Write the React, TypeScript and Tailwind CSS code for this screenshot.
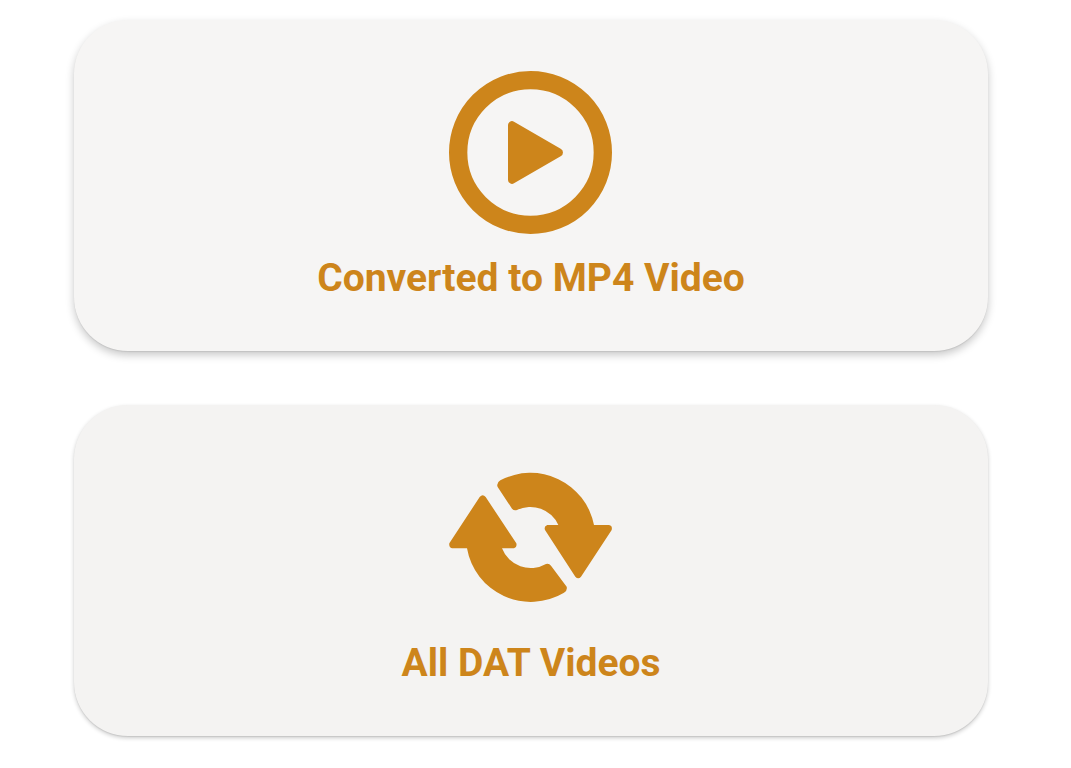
import type { ReactNode } from "react";
import clsx from "clsx";

function PlayIcon() {
  return (
    <svg aria-hidden viewBox="27 33 492 492" className="size-[164px]" fill="currentColor">
      <circle cx="271.5" cy="277.5" r="217" fill="none" stroke="currentColor" strokeWidth="55" />
      <path d="M204 196A12 12 0 0 1 222 185L362 266A13 13 0 0 1 362 289L222 370A12 12 0 0 1 204 360Z" />
    </svg>
  );
}

function ConvertIcon() {
  return (
    <svg aria-hidden viewBox="27 -12 492 492" className="size-[164px]" fill="currentColor">
      <path d="M181 61A194 194 0 0 1 462 195H507Q518 197 515 210L423 350Q415 359 406 350L315 210Q311 198 322 195H355A92 92 0 0 0 231 150Q222 153 216 146L173 81Q168 69 181 61Z" />
      <path d="M81 265A194 194 0 0 0 372 398Q383 392 380 380L333 317Q327 309 318 312A92 92 0 0 1 186 265H222Q232 262 229 250L137 111Q128 100 119 111L28 250Q26 262 36 265Z" />
    </svg>
  );
}

type MenuCardProps = {
  label: string;
  icon: ReactNode;
  className: string;
};

function MenuCard({ label, icon, className }: MenuCardProps) {
  return (
    <button
      type="button"
      className={clsx(
        "flex w-full flex-col items-center gap-5 rounded-[54px] px-6 pt-[51px] pb-[50px] text-[#cd851b]",
        className,
      )}
    >
      {icon}
      <span className="text-[39px] leading-[46px] font-bold">{label}</span>
    </button>
  );
}

export default function App() {
  return (
    <main className="flex min-h-screen flex-col gap-[54px] bg-white pt-5 pr-[83px] pb-7 pl-[74px] font-['Roboto',sans-serif]">
      <MenuCard
        label="Converted to MP4 Video"
        icon={<PlayIcon />}
        className="bg-[#f6f5f4] shadow-[0_4px_8px_rgba(0,0,0,0.22),0_1px_1px_rgba(0,0,0,0.08)]"
      />
      <MenuCard
        label="All DAT Videos"
        icon={<ConvertIcon />}
        className="bg-[#f4f3f2] shadow-[0_2px_4px_rgba(0,0,0,0.2),0_1px_1px_rgba(0,0,0,0.08)]"
      />
    </main>
  );
}
